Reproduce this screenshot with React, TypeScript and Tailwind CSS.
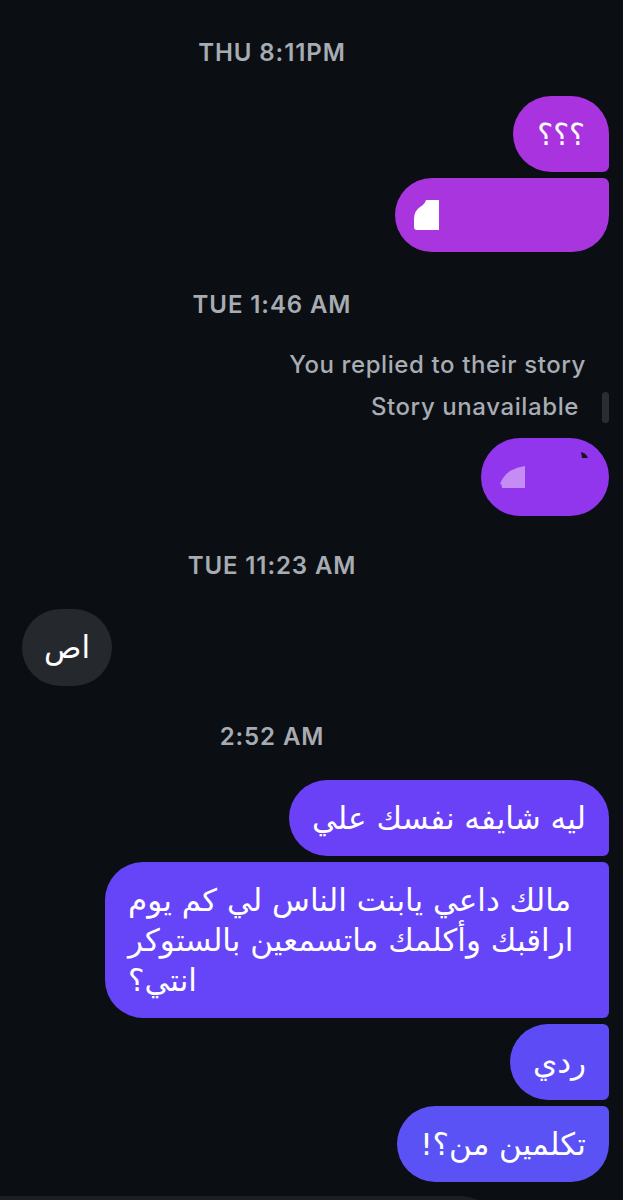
import React from "react";

type Msg = {
  text?: string;
  lines?: string[];
  color: string;
  corners: string;
};

const arabic = { fontFamily: '"DejaVu Sans", "Noto Sans", sans-serif' };

const Stamp = ({ label, mt }: { label: string; mt: string }) => (
  <div className={`${mt} w-[544px] text-center text-[24px] leading-[30px] font-semibold tracking-[0.9px] text-[#a7abb2]`}>
    {label}
  </div>
);

const Bubble = ({ text, lines, color, corners }: Msg) => (
  <div
    dir="rtl"
    style={arabic}
    className={`${color} ${corners} px-[23px] py-[18px] text-left text-[31px] leading-[40px] text-white`}
  >
    {lines
      ? lines.map((l, i) => (
          <span key={i} className="block">
            {l}
          </span>
        ))
      : text}
  </div>
);

export default function App() {
  return (
    <div className="w-[623px] h-[1200px] overflow-hidden bg-[#0b0f13] pt-[38px] font-['Inter',sans-serif] flex flex-col">
      <Stamp label="THU 8:11PM" mt="mt-0" />

      <div className="mt-[28px] flex flex-col items-end gap-[6px] pr-[14px]">
        <div
          dir="rtl"
          style={arabic}
          className="bg-[#a934df] rounded-[38px] rounded-br-[6px] h-[76px] w-[96px] pr-[24px] flex items-center justify-start text-[30px] text-white"
        >
          ؟؟؟
        </div>
        <div className="bg-[#a835dd] rounded-[38px] rounded-tr-[6px] h-[74px] w-[214px] pl-[19px] flex items-center">
          <svg width="25" height="30" viewBox="0 0 25 30">
            <path d="M25 0V30H3Q0 30 0 27V19Q0 11 6 7Q11 4 12 0Z" fill="#fff" />
          </svg>
        </div>
      </div>

      <Stamp label="TUE 1:46 AM" mt="mt-[38px]" />

      <div className="mt-[30px] pr-[37px] text-right text-[24px] leading-[30px] font-medium tracking-[0.6px] text-[#a8acb3]">
        You replied to their story
      </div>
      <div className="mt-[11px] pr-[14px] flex items-center justify-end gap-[23px] h-[32px]">
        <span className="text-[24px] font-medium tracking-[0.6px] text-[#a8acb3]">Story unavailable</span>
        <div className="w-[7px] h-[31px] rounded-full bg-[#2a2e34]" />
      </div>

      <div className="mt-[15px] pr-[14px] flex justify-end">
        <div className="relative bg-[#9236ee] rounded-full h-[78px] w-[128px] pl-[19px] flex items-center">
          <svg width="25" height="22" viewBox="0 0 25 22">
            <path d="M25 0V22H3Q1 22 2 19L0 18Q3 10 10 5Q17 1 25 0Z" fill="#c58cf5" />
          </svg>
          <svg className="absolute right-[20px] top-[14px]" width="8" height="7" viewBox="0 0 8 7">
            <path d="M0 0Q5 1 7 6H1Z" fill="#1c1027" />
          </svg>
        </div>
      </div>

      <Stamp label="TUE 11:23 AM" mt="mt-[35px]" />

      <div className="mt-[28px] pl-[22px] flex">
        <div
          dir="rtl"
          style={arabic}
          className="bg-[#25292e] rounded-full h-[77px] px-[22px] flex items-center text-[31px] text-white"
        >
          اص
        </div>
      </div>

      <Stamp label="2:52 AM" mt="mt-[36px]" />

      <div className="mt-[28px] pr-[14px] flex flex-col items-end gap-[6px]">
        <Bubble text="ليه شايفه نفسك علي" color="bg-[#6a41f7]" corners="rounded-[38px] rounded-br-[6px]" />
        <div className="w-[504px]">
          <Bubble
            lines={["مالك داعي يابنت الناس لي كم يوم", "اراقبك وأكلمك ماتسمعين بالستوكر", "انتي؟"]}
            color="bg-[#6645f8]"
            corners="rounded-[38px] rounded-r-[6px]"
          />
        </div>
        <Bubble text="ردي" color="bg-[#5d4cf6]" corners="rounded-[38px] rounded-r-[6px]" />
        <Bubble text="تكلمين من؟!" color="bg-[#5a52f4]" corners="rounded-[38px] rounded-tr-[6px]" />
      </div>

      <div className="mt-[14px] w-[497px] h-[40px] shrink-0 rounded-tr-[36px] bg-[#1b1e22]" />
    </div>
  );
}
